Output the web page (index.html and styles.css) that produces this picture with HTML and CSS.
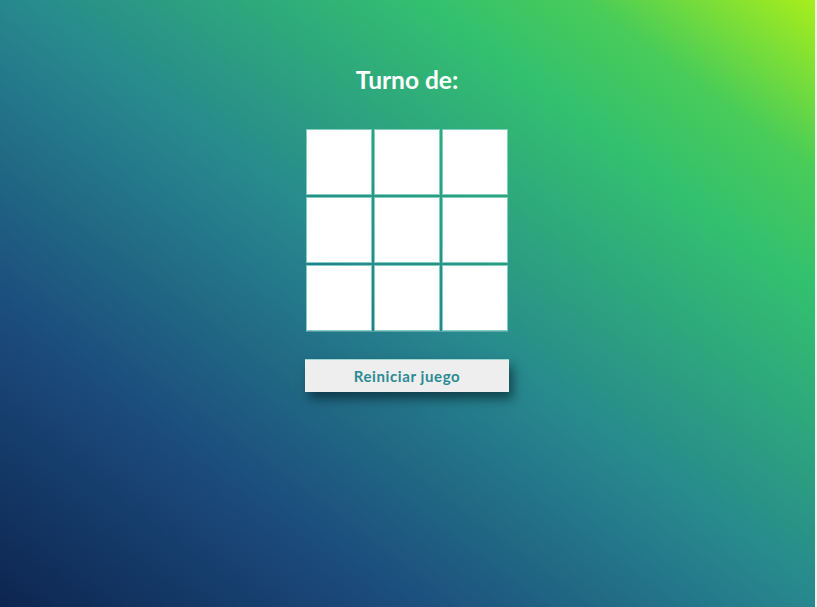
FILE: index.html
```html
<!DOCTYPE html>
<html lang="es">
<head>
<meta charset="utf-8">
<title>Tres en raya</title>
<link rel="stylesheet" href="styles.css">
</head>
<body>
<main class="page">
  <h1 class="turn">Turno de:</h1>
  <div class="board">
    <div class="cell"></div><div class="cell"></div><div class="cell"></div>
    <div class="cell"></div><div class="cell"></div><div class="cell"></div>
    <div class="cell"></div><div class="cell"></div><div class="cell"></div>
  </div>
  <button class="reset">Reiniciar juego</button>
</main>
</body>
</html>
```
FILE: styles.css
```css
html {
  background: #eeeeee;
}
body {
  margin: 0;
  font-family: Lato, "Noto Sans", sans-serif;
}
.page {
  margin-right: 2px;
  padding-right: 1px;
  min-height: 607px;
  box-sizing: border-box;
  padding-top: 66px;
  display: flex;
  flex-direction: column;
  align-items: center;
  background: linear-gradient(to right top, #0d2550 0%, #1b4b7c 24%, #27878e 50%, #33c06f 76%, #49cc58 86%, #a8ee1b 100%);
}
.turn {
  margin: 0;
  color: #ffffff;
  font-size: 24.5px;
  font-weight: 700;
  line-height: 28px;
}
.board {
  margin-top: 35px;
  display: grid;
  grid-template-columns: repeat(3, 66px);
  grid-template-rows: repeat(3, 66px);
  gap: 2px;
  border-bottom: 1px solid rgba(255, 255, 255, 0.25);
}
.cell {
  background: #ffffff;
  border: 1px solid #80cfc0;
}
.reset {
  margin-top: 27px;
  width: 204px;
  height: 33px;
  padding: 0;
  border: none;
  border-top: 1px solid #9fd6d2;
  background: #eeeeee;
  color: #2a8a93;
  font-family: Lato, "Noto Sans", sans-serif;
  font-size: 15px;
  font-weight: 700;
  letter-spacing: 0.6px;
  line-height: 30px;
  box-shadow: 4px 7px 10px rgba(0, 20, 30, 0.55);
  cursor: pointer;
}
```
